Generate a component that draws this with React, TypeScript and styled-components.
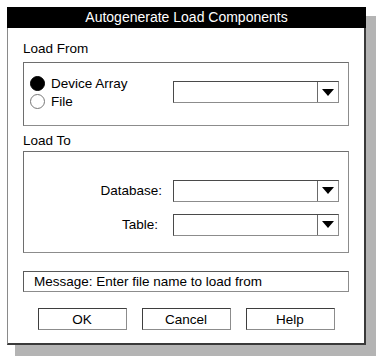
import React from "react";
import styled, { createGlobalStyle } from "styled-components";

const GlobalStyle = createGlobalStyle`
  html, body {
    margin: 0;
    padding: 0;
    background: #ffffff;
  }
  body {
    font-family: "Liberation Sans", Arial, sans-serif;
    font-size: 13.5px;
    color: #000;
  }
`;

const Page = styled.div`
  width: 384px;
  height: 364px;
  padding: 7px 0 0 7px;
  box-sizing: border-box;
`;

const Dialog = styled.div`
  width: 359px;
  height: 338px;
  box-sizing: border-box;
  background: #fff;
  border-left: 1px solid #8a8a8a;
  border-right: 2px solid #3a3a3a;
  border-bottom: 2px solid #3a3a3a;
  box-shadow: 9px 10px 0 1px #b4b4b4;
  display: flex;
  flex-direction: column;
`;

const TitleBar = styled.div`
  height: 21px;
  margin-left: -1px;
  margin-right: -2px;
  background: #000;
  color: #fff;
  font-size: 14px;
  line-height: 21px;
  text-align: center;
`;

const Content = styled.div`
  padding: 13px 15px 0 15px;
  display: flex;
  flex-direction: column;
`;

const GroupLabel = styled.div<{ $top?: number; $gap: number }>`
  height: 16px;
  line-height: 16px;
  margin-top: ${({ $top }) => $top ?? 0}px;
  margin-bottom: ${({ $gap }) => $gap}px;
`;

const GroupBox = styled.div<{ $height: number }>`
  height: ${({ $height }) => $height}px;
  box-sizing: border-box;
  border: 1px solid #6e6e6e;
  border-right-color: #8c8c8c;
  border-bottom-color: #8c8c8c;
`;

const FromBox = styled(GroupBox)`
  display: flex;
  justify-content: space-between;
  padding: 11px 9px 0 6px;
`;

const RadioList = styled.div`
  display: flex;
  flex-direction: column;
`;

const RadioRow = styled.label`
  display: flex;
  align-items: center;
  gap: 6px;
  height: 18px;
`;

const RadioDot = styled.span<{ $checked?: boolean }>`
  width: 15px;
  height: 15px;
  box-sizing: border-box;
  border-radius: 50%;
  border: 1px solid ${({ $checked }) => ($checked ? "#000" : "#777")};
  background: ${({ $checked }) => ($checked ? "#000" : "#fff")};
`;

const Combo = styled.div<{ $top?: number }>`
  width: 166px;
  height: 22px;
  margin-top: ${({ $top }) => $top ?? 0}px;
  box-sizing: border-box;
  display: flex;
  border: 1px solid #4a4a4a;
  border-right-color: #8c8c8c;
  border-bottom-color: #8c8c8c;
`;

const ComboField = styled.div`
  flex: 1;
`;

const ComboArrow = styled.div`
  width: 20px;
  border-left: 1px solid #6a6a6a;
  display: flex;
  align-items: center;
  justify-content: center;
`;

const Triangle = styled.span`
  width: 0;
  height: 0;
  border-left: 6px solid transparent;
  border-right: 6px solid transparent;
  border-top: 7px solid #000;
`;

const ToBox = styled(GroupBox)`
  padding: 28px 9px 0 0;
  display: grid;
  grid-template-columns: 1fr 166px;
  grid-auto-rows: 21px;
  row-gap: 13px;
  align-content: start;
  align-items: center;
`;

const FieldLabel = styled.div<{ $pad: number }>`
  text-align: right;
  padding-right: ${({ $pad }) => $pad}px;
`;

const MessageBar = styled.div`
  margin-top: 18px;
  height: 21px;
  box-sizing: border-box;
  border: 1px solid #5a5a5a;
  border-right-color: #8c8c8c;
  border-bottom-color: #8c8c8c;
  padding-left: 10px;
  line-height: 19px;
`;

const ButtonRow = styled.div`
  margin-top: 16px;
  display: flex;
  justify-content: center;
  gap: 15px;
`;

const Button = styled.button`
  width: 89px;
  height: 22px;
  box-sizing: border-box;
  background: #fff;
  border: 1px solid #3e3e3e;
  border-right-color: #8c8c8c;
  border-bottom-color: #8c8c8c;
  font-family: "Liberation Sans", Arial, sans-serif;
  font-size: 13.5px;
  color: #000;
  padding: 0;
`;

function Dropdown({ top }: { top?: number }) {
  return (
    <Combo $top={top}>
      <ComboField />
      <ComboArrow>
        <Triangle />
      </ComboArrow>
    </Combo>
  );
}

export default function App() {
  return (
    <Page>
      <GlobalStyle />
      <Dialog>
        <TitleBar>Autogenerate Load Components</TitleBar>
        <Content>
          <GroupLabel $gap={5}>Load From</GroupLabel>
          <FromBox $height={64}>
            <RadioList>
              <RadioRow>
                <RadioDot $checked />
                Device Array
              </RadioRow>
              <RadioRow>
                <RadioDot />
                File
              </RadioRow>
            </RadioList>
            <Dropdown top={7} />
          </FromBox>

          <GroupLabel $top={7} $gap={2}>
            Load To
          </GroupLabel>
          <ToBox $height={102}>
            <FieldLabel $pad={11}>Database:</FieldLabel>
            <Dropdown />
            <FieldLabel $pad={15}>Table:</FieldLabel>
            <Dropdown />
          </ToBox>

          <MessageBar>Message: Enter file name to load from</MessageBar>

          <ButtonRow>
            <Button>OK</Button>
            <Button>Cancel</Button>
            <Button>Help</Button>
          </ButtonRow>
        </Content>
      </Dialog>
    </Page>
  );
}
